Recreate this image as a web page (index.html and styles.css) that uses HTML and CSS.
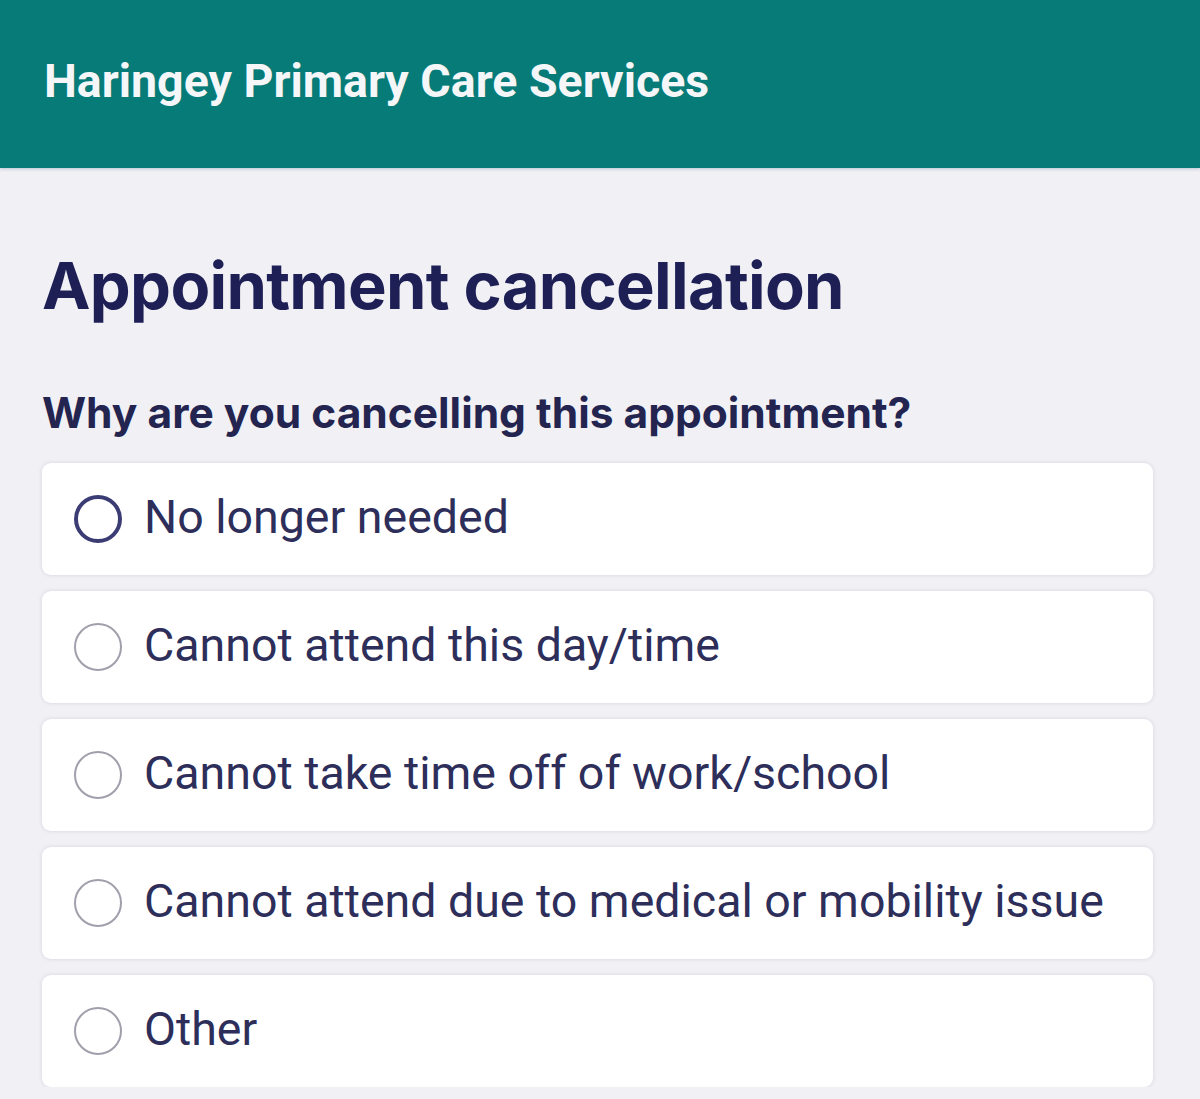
FILE: index.html
```html
<!DOCTYPE html>
<html lang="en">
<head>
<meta charset="utf-8">
<title>Appointment cancellation</title>
<link rel="stylesheet" href="styles.css">
</head>
<body>
<header class="topbar">
  <span class="brand">Haringey Primary Care Services</span>
</header>
<main class="content">
  <h1 class="title">Appointment cancellation</h1>
  <h2 class="question">Why are you cancelling this appointment?</h2>
  <ul class="options">
    <li class="option"><span class="radio radio-active"></span><span class="label">No longer needed</span></li>
    <li class="option"><span class="radio"></span><span class="label">Cannot attend this day/time</span></li>
    <li class="option"><span class="radio"></span><span class="label">Cannot take time off of work/school</span></li>
    <li class="option"><span class="radio"></span><span class="label">Cannot attend due to medical or mobility issue</span></li>
    <li class="option"><span class="radio"></span><span class="label">Other</span></li>
  </ul>
</main>
</body>
</html>
```

FILE: styles.css
```css
html, body {
  margin: 0;
  padding: 0;
}
body {
  background: #f0f0f5;
  font-family: Roboto, "Liberation Sans", sans-serif;
  overflow: hidden;
}
.topbar {
  height: 168px;
  background: #077b78;
  display: flex;
  align-items: center;
  padding: 0 44px;
  box-sizing: border-box;
  box-shadow: 0 1px 3px rgba(40,80,110,0.25);
}
.brand {
  color: #f4f6f8;
  font-family: Roboto, sans-serif;
  font-weight: 700;
  font-size: 46.5px;
  margin-top: -6px;
}
.content {
  padding: 0 47px 0 42px;
}
.title {
  margin: 74px 0 0 0;
  font-family: Inter, sans-serif;
  font-weight: 700;
  font-size: 65px;
  line-height: 88px;
  color: #1e1f55;
  letter-spacing: -0.7px;
}
.question {
  margin: 55px 0 0 0;
  font-family: Inter, sans-serif;
  font-weight: 700;
  font-size: 42.5px;
  line-height: 56px;
  color: #23244f;
}
.options {
  list-style: none;
  margin: 22px 0 0 0;
  padding: 0;
  display: flex;
  flex-direction: column;
  gap: 16px;
}
.option {
  height: 112px;
  background: #fff;
  border-radius: 9px;
  box-shadow: 0 0 4px rgba(60,60,90,0.14);
  display: flex;
  align-items: center;
  padding: 0 32px;
  gap: 22px;
}
.radio {
  width: 44px;
  height: 44px;
  border-radius: 50%;
  border: 2px solid #a0a0ac;
  flex: none;
}
.radio-active {
  border: 4px solid #3c3c74;
  width: 40px;
  height: 40px;
}
.label {
  font-size: 46.5px;
  color: #2d2e5a;
  margin-top: -4px;
}
```
